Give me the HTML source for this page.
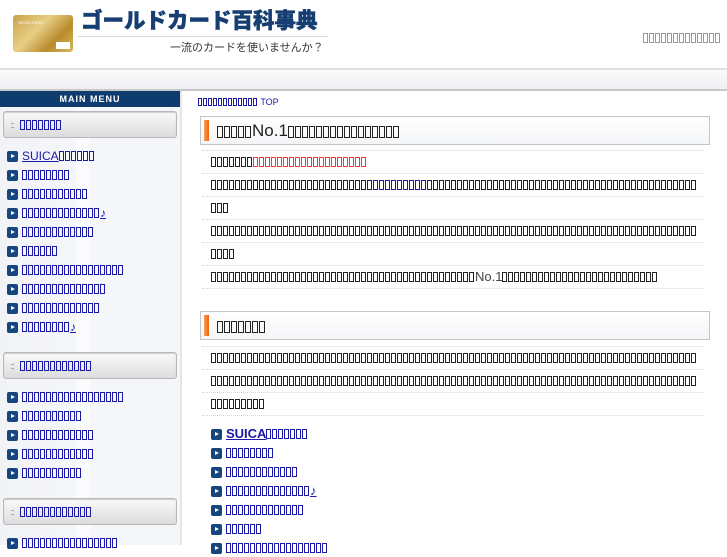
<!DOCTYPE html>
<html><head><meta charset="utf-8">
<style>
*{margin:0;padding:0;box-sizing:border-box}
body{width:727px;height:545px;overflow:hidden;background:#fff;font-family:"Liberation Sans","DejaVu Sans",sans-serif;position:relative;color:#222}
.b{display:inline-block;width:5px;height:10px;border:1px solid currentColor;margin-right:1px;vertical-align:-1px}
a{color:#1a1aa6;text-decoration:underline}
#hdr{position:absolute;left:0;top:0;width:727px;height:68px}
#card{position:absolute;left:13px;top:15px;width:60px;height:37px;border-radius:3px;background:linear-gradient(135deg,#c9a24a,#e8cf85 40%,#b98c2e 70%,#d8b862)}
#card i{position:absolute;right:3px;bottom:3px;width:14px;height:7px;background:#fff}
#card s{position:absolute;left:5px;top:5px;font-size:4px;color:#fff;text-decoration:none}
#title{position:absolute;left:81px;top:5px;font:900 21.5px/30px "Noto Sans CJK JP",sans-serif;color:#163e73;-webkit-text-stroke:.5px #163e73}
#tl{position:absolute;left:78px;top:36px;width:250px;height:1px;background:#d6d6d6}
#sub{position:absolute;left:170px;top:39px;font:11px/16px "Noto Sans CJK JP",sans-serif;color:#333}
#rt{position:absolute;left:643px;top:30px;font-size:13px;color:#999}
#nav{position:absolute;left:0;top:68px;width:727px;height:23px;border-top:2px solid #e0e0e0;border-bottom:2px solid #c8c8c8;background:linear-gradient(#fafafa,#eeeff2)}
#side{position:absolute;left:0;top:91px;width:180px;height:454px;background:linear-gradient(90deg,#f2f3f7 0,#f5f6fa 75px,#fafbfd 76px,#fafbfd 90px,#f5f6fa 91px)}
#mm{height:16px;background:#0e3c6e;color:#fff;font-size:9px;font-weight:bold;letter-spacing:1px;text-align:center;line-height:16px}
.sb{margin:4px 3px 0 3px;height:27px;border:1px solid #b8b8b8;border-radius:3px;background:linear-gradient(#fafafa,#dcdcdc);box-shadow:0 1px 1px #ccc inset;font-size:13px;line-height:25px;padding-left:16px;position:relative}
.sb:before{content:"";position:absolute;left:7px;top:11px;width:3px;height:3px;border-top:1px solid #aaa;border-bottom:1px solid #aaa}
.ul{list-style:none;margin-top:9px}
.ul li{height:19px;line-height:19px;font-size:12px;padding-left:22px;position:relative}
.ic:before{content:"";position:absolute;left:7px;top:4px;width:11px;height:11px;border-radius:2px;background:#15477e}
.ic:after{content:"";position:absolute;left:11px;top:7px;border-left:4px solid #fff;border-top:2.5px solid transparent;border-bottom:2.5px solid transparent}
#line{position:absolute;left:180px;top:91px;width:2px;height:454px;background:#e6e6e6}
#bc{position:absolute;left:198px;top:97px;font-size:9px;color:#1a1aa6}
#bc .b{width:4px;height:8px}
.h2{position:absolute;left:200px;width:510px;height:29px;border:1px solid #c4c4c4;background:linear-gradient(#fff,#f4f5f7);font-size:17px;line-height:27px;padding-left:16px;color:#222}
.h2 .b{width:6px;height:12px;margin-right:1px;vertical-align:-2px}
.h2:before{content:"";position:absolute;left:3px;top:3px;width:5px;height:21px;background:linear-gradient(90deg,#f7a055,#f06010)}
.p{position:absolute;left:202px;width:502px;font-size:13px}
.p div{border-top:1px dotted #d8d8d8;line-height:22px;padding-left:9px;white-space:nowrap;overflow:hidden}
.p div.e{height:1px}
.cl{position:absolute;left:200px;list-style:none}
.cl li{height:19px;line-height:19px;font-size:13px;padding-left:26px;position:relative}
.cl li.ic:before{left:11px;top:5px}
.cl li.ic:after{left:15px;top:8px}
</style></head><body>
<div id="hdr">
 <div id="card"><s>NICOS CARD</s><i></i></div>
 <div id="title">ゴールドカード百科事典</div>
 <div id="tl"></div>
 <div id="sub">一流のカードを使いませんか？</div>
 <div id="rt">[13]</div>
</div>
<div id="nav"></div>
<div id="side">
 <div id="mm">MAIN MENU</div>
 <div class="sb"><a>[7]</a></div>
 <ul class="ul">
 <li class="ic"><a>SUICA[6]</a></li>
 <li class="ic"><a>[8]</a></li>
 <li class="ic"><a>[11]</a></li>
 <li class="ic"><a>[13]♪</a></li>
 <li class="ic"><a>[12]</a></li>
 <li class="ic"><a>[6]</a></li>
 <li class="ic"><a>[17]</a></li>
 <li class="ic"><a>[14]</a></li>
 <li class="ic"><a>[13]</a></li>
 <li class="ic"><a>[8]♪</a></li>
 </ul>
 <div class="sb" style="margin-top:15px"><a>[12]</a></div>
 <ul class="ul">
 <li class="ic"><a>[17]</a></li>
 <li class="ic"><a>[10]</a></li>
 <li class="ic"><a>[12]</a></li>
 <li class="ic"><a>[12]</a></li>
 <li class="ic"><a>[10]</a></li>
 </ul>
 <div class="sb" style="margin-top:15px"><a>[12]</a></div>
 <ul class="ul"><li class="ic"><a>[16]</a></li></ul>
</div>
<div id="line"></div>
<div id="bc"><a>[12]</a> TOP</div>
<div class="h2" style="top:116px">[5]No.1[16]</div>
<div class="p" style="top:150px">
 <div>[7]<span style="color:#f33">[19]</span></div>
 <div>[27]<a>[9]</a>[45]</div>
 <div>[3]</div>
 <div>[81]</div>
 <div>[4]</div>
 <div>[44]<span style="color:#444">No.1</span>[26]</div>
 <div class="e"></div>
</div>
<div class="h2" style="top:311px">[7]</div>
<div class="p" style="top:346px">
 <div>[81]</div>
 <div>[81]</div>
 <div>[9]</div>
 <div class="e"></div>
</div>
<ul class="cl" style="top:424px">
 <li class="ic"><a style="font-weight:bold">SUICA[7]</a></li>
 <li class="ic"><a>[8]</a></li>
 <li class="ic"><a>[12]</a></li>
 <li class="ic"><a>[14]♪</a></li>
 <li class="ic"><a>[13]</a></li>
 <li class="ic"><a>[6]</a></li>
 <li class="ic"><a>[17]</a></li>
</ul>
<script>
document.body.innerHTML=document.body.innerHTML.replace(/\[(\d+)\]/g,function(m,n){return '<span class="b"></span>'.repeat(+n)});
</script>
</body></html>
